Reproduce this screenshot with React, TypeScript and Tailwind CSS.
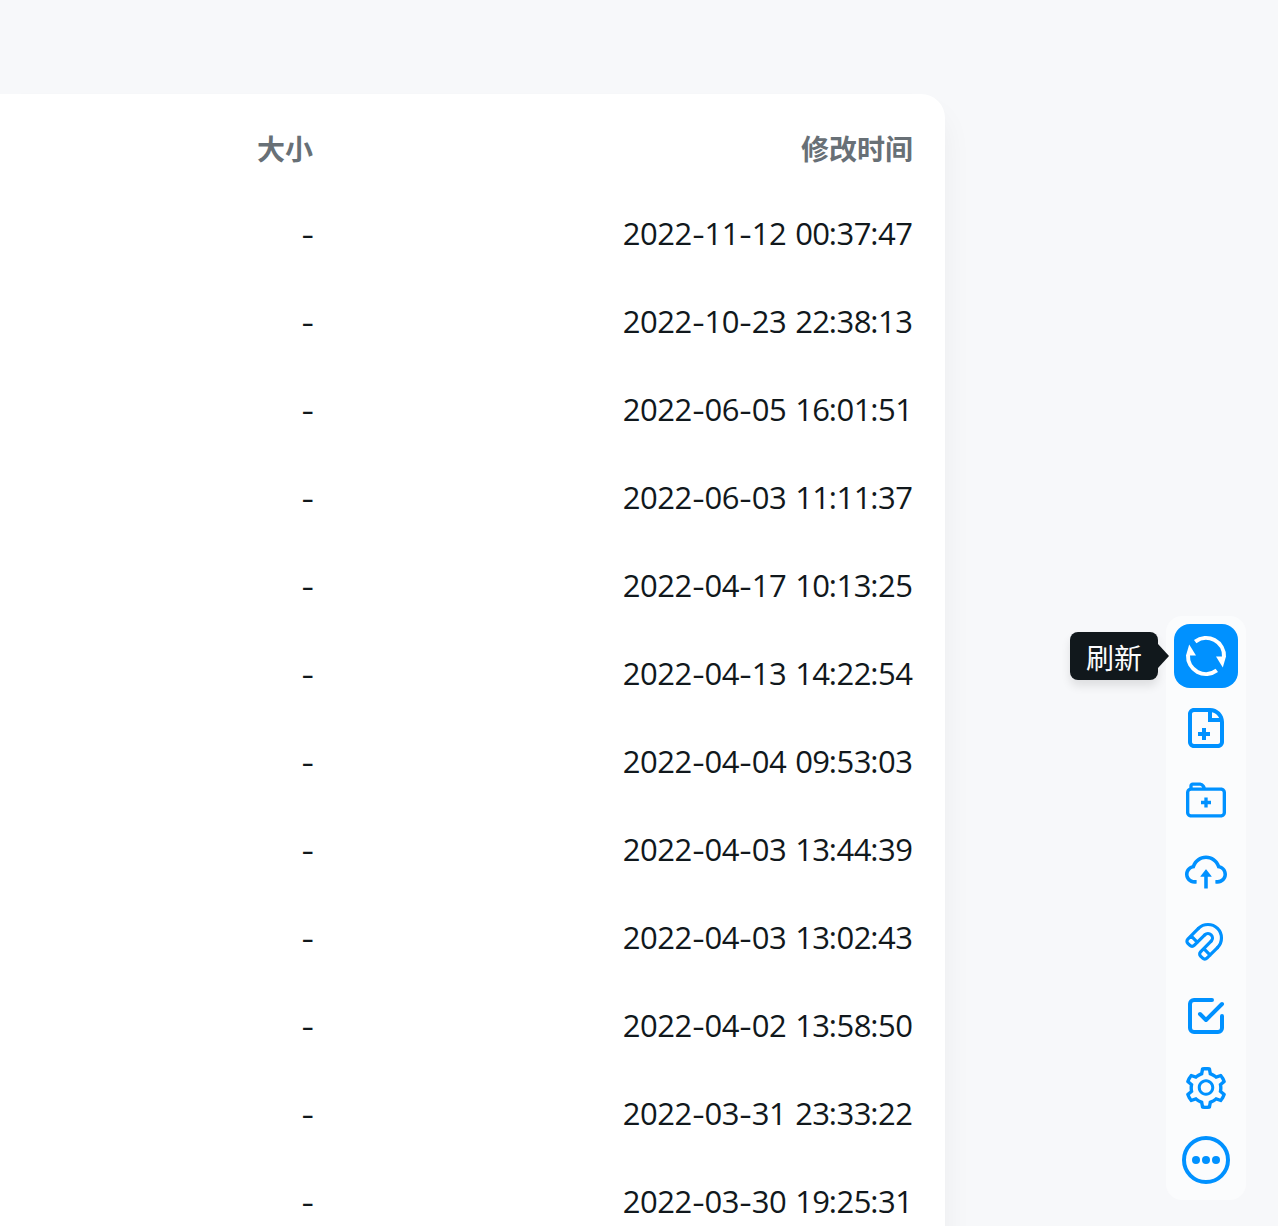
import type { ReactNode } from "react";
import { CgFileAdd, CgFolderAdd } from "react-icons/cg";
import { AiOutlineCloudUpload, AiOutlineSetting } from "react-icons/ai";

const dates = [
  "2022-11-12 00:37:47",
  "2022-10-23 22:38:13",
  "2022-06-05 16:01:51",
  "2022-06-03 11:11:37",
  "2022-04-17 10:13:25",
  "2022-04-13 14:22:54",
  "2022-04-04 09:53:03",
  "2022-04-03 13:44:39",
  "2022-04-03 13:02:43",
  "2022-04-02 13:58:50",
  "2022-03-31 23:33:22",
  "2022-03-30 19:25:31",
];

function Timestamp({ value }: { value: string }) {
  return (
    <span className="whitespace-pre tracking-[-0.48px]">
      {value.split(/([-: ])/).map((part, i) =>
        part === "-" ? (
          <span key={i} className="inline-block w-[12.8px] scale-x-125 text-center tracking-normal">-</span>
        ) : part === ":" ? (
          <span key={i} className="inline-block w-[6.94px] tracking-normal"><span className="-ml-[0.9px]">:</span></span>
        ) : part === " " ? (
          <span key={i} className="inline-block w-[8.9px]"> </span>
        ) : (
          part
        ),
      )}
    </span>
  );
}

function RefreshIcon() {
  return (
    <svg viewBox="0 0 48 48" className="size-12" fill="none">
      <path d="M13.2 9.6A18 18 0 0 1 42 25" stroke="currentColor" strokeWidth="4" />
      <path d="M34.8 38.4A18 18 0 0 1 6 23" stroke="currentColor" strokeWidth="4" />
      <path d="M34 24.6H44L40.8 35.4Z" fill="currentColor" />
      <path d="M14 23.4H4L7.2 12.6Z" fill="currentColor" />
    </svg>
  );
}

function MagnetIcon() {
  return (
    <svg viewBox="43 0 512 512" className="size-12" fill="none" stroke="currentColor" strokeWidth="34" strokeLinecap="round" strokeLinejoin="round">
      <path d="M421.83 293.82A144 144 0 0 0 218.18 90.17M353.94 225.94a48 48 0 0 0-67.88-67.88" />
      <path d="M286.06 158.06L172.92 271.19a32 32 0 0 1-45.25 0L105 248.57a32 32 0 0 1 0-45.26L218.18 90.17M421.83 293.82L308.69 407a32 32 0 0 1-45.26 0l-22.62-22.63a32 32 0 0 1 0-45.26l113.13-113.17M139.6 169.98l67.88 67.89M275.36 305.75l67.89 67.88" />
    </svg>
  );
}

function CheckboxIcon() {
  return (
    <svg viewBox="0 0 24 24" className="size-12" fill="none" stroke="currentColor" strokeWidth="2" strokeLinecap="round" strokeLinejoin="round">
      <path d="M9 11l3 3l8 -8" />
      <path d="M20 12v6a2 2 0 0 1 -2 2h-12a2 2 0 0 1 -2 -2v-12a2 2 0 0 1 2 -2h9" />
    </svg>
  );
}

function MoreIcon() {
  return (
    <svg viewBox="0 0 48 48" className="size-12">
      <circle cx="24" cy="24" r="22" fill="none" stroke="currentColor" strokeWidth="4" />
      <circle cx="14" cy="24" r="4" fill="currentColor" />
      <circle cx="24" cy="24" r="4" fill="currentColor" />
      <circle cx="34" cy="24" r="4" fill="currentColor" />
    </svg>
  );
}

function Tool({ children }: { children: ReactNode }) {
  return <button className="flex size-16 items-center justify-center rounded-2xl">{children}</button>;
}

export default function App() {
  return (
    <div className="relative h-[1226px] overflow-hidden bg-[#f7f8fa] pt-[94px] font-['Open_Sans','Noto_Sans_CJK_SC',sans-serif] text-[#11181c]">
      <main className="h-[1400px] w-[945px] rounded-tr-[24px] bg-white pt-4 pr-8 shadow-[0_20px_30px_rgba(0,0,0,0.05)]">
        <div className="flex h-[80px] items-center pb-[3px] text-[28px] font-bold text-[#687076]">
          <span className="w-[313px] text-right">大小</span>
          <span className="flex-1 text-right">修改时间</span>
        </div>
        {dates.map((date) => (
          <div key={date} className="flex h-[88px] items-center pb-0.5 text-[31px] font-normal">
            <span className="w-[313px] text-right"><span className="inline-block origin-right translate-x-px scale-x-125">-</span></span>
            <span className="flex-1 pr-[0.5px] text-right">
              <Timestamp value={date} />
            </span>
          </div>
        ))}
      </main>

      <aside className="absolute top-[616px] left-[1166px] flex flex-col gap-2 rounded-2xl bg-[#fbfcfd] p-2 text-[#0091ff]">
        <button className="flex size-16 items-center justify-center rounded-2xl bg-[#0091ff] text-white">
          <RefreshIcon />
        </button>
        <Tool><CgFileAdd className="size-12" /></Tool>
        <Tool><CgFolderAdd className="size-10" /></Tool>
        <Tool><AiOutlineCloudUpload className="size-12" /></Tool>
        <Tool><MagnetIcon /></Tool>
        <Tool><CheckboxIcon /></Tool>
        <Tool><AiOutlineSetting className="size-12" /></Tool>
        <Tool><MoreIcon /></Tool>
      </aside>

      <div className="absolute top-[632px] left-[1070px] flex h-12 w-[88px] items-center justify-center rounded-lg bg-[#11181c] pt-[3px] text-[28px] text-[#fbfcfd] shadow-[0_6px_10px_rgba(0,0,0,0.1)]">
        刷新
        <svg viewBox="0 0 11 24" className="absolute top-3 left-[88px] h-6 w-[11px]">
          <path d="M0 0L11 12L0 24Z" fill="#11181c" />
        </svg>
      </div>
    </div>
  );
}
